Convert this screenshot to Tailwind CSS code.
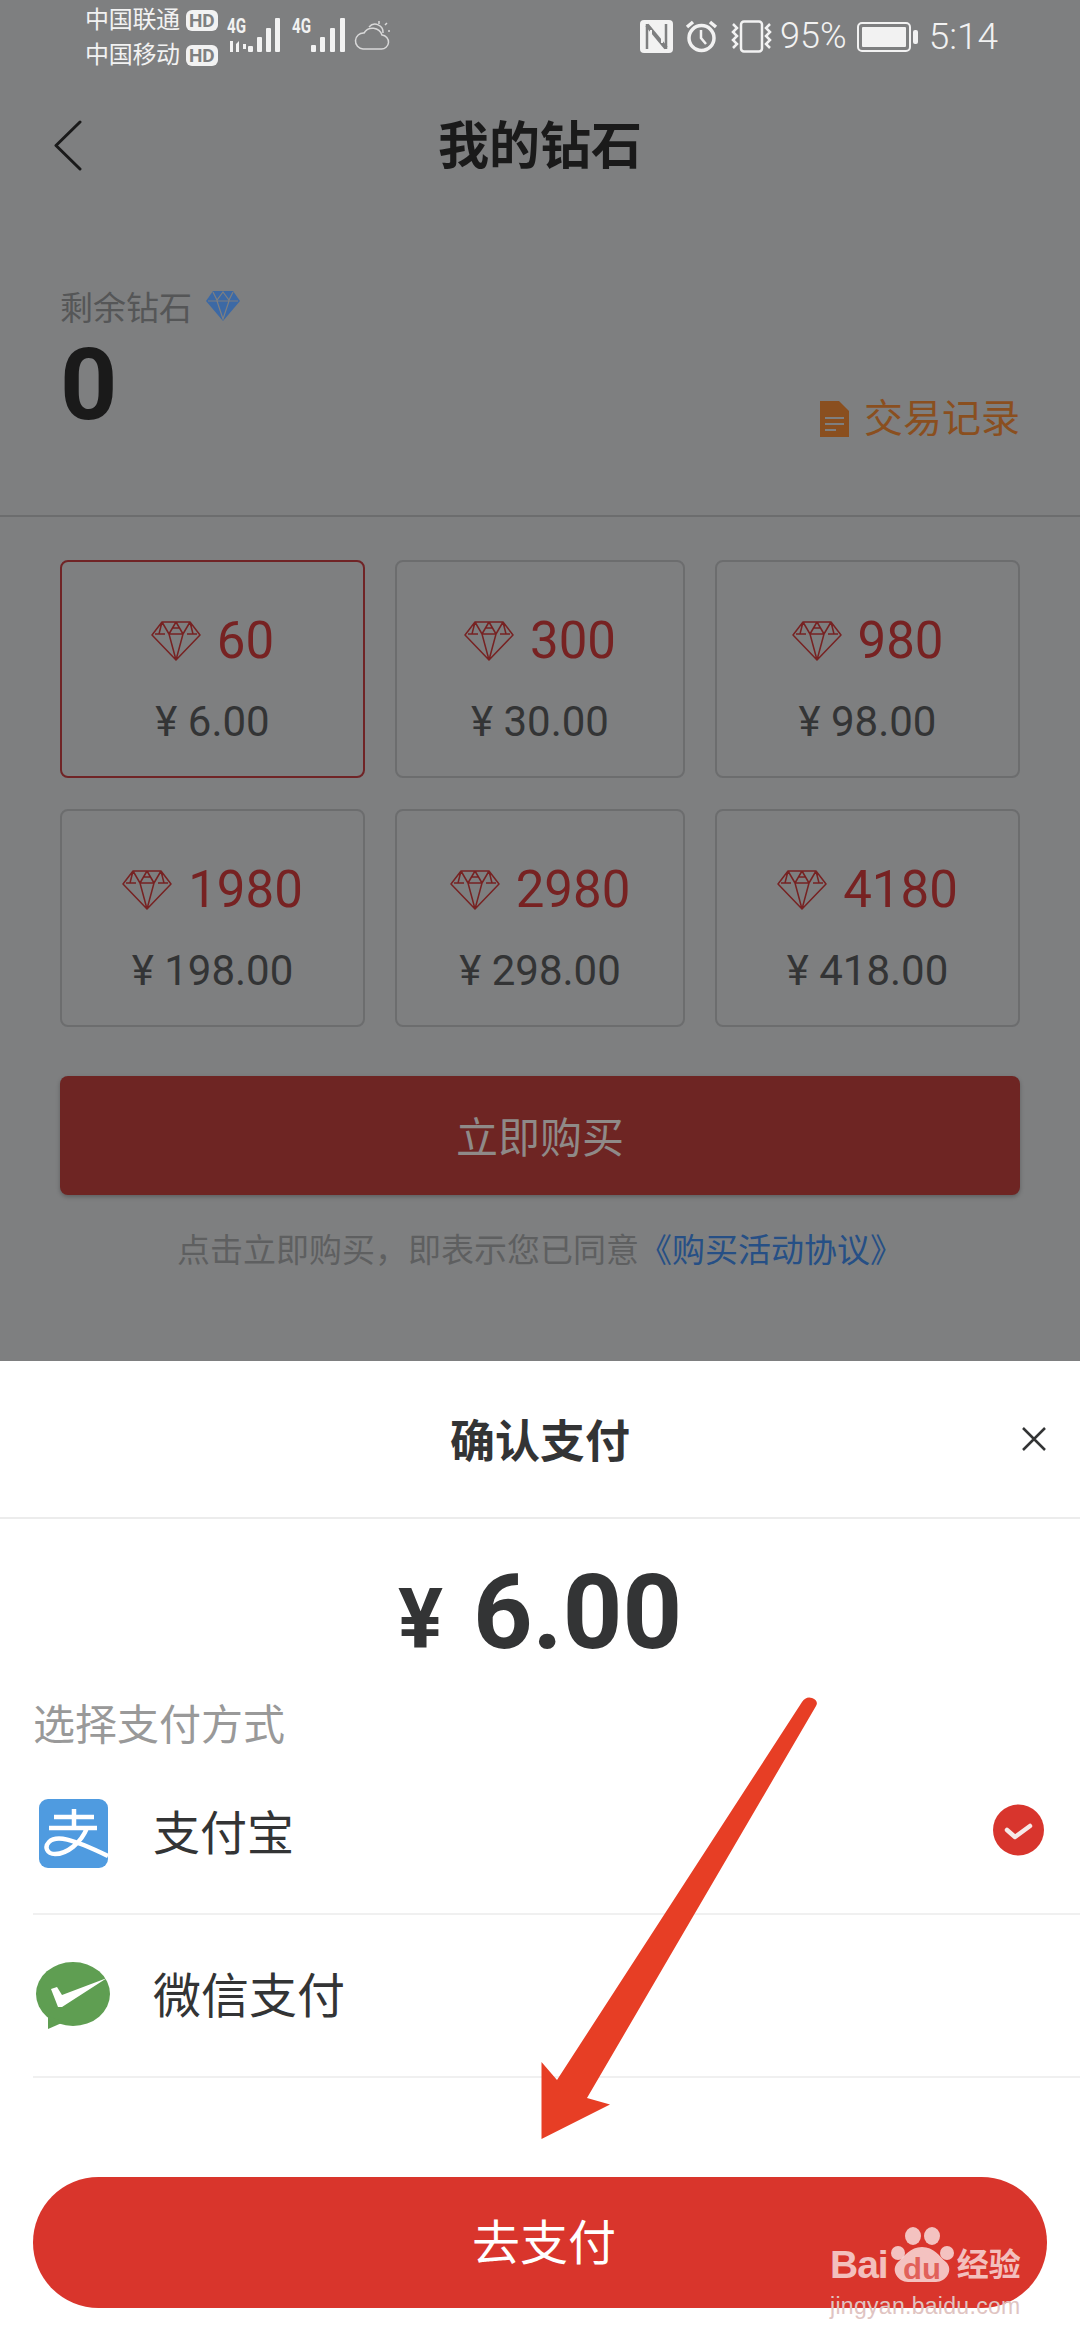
<!DOCTYPE html>
<html lang="zh">
<head>
<meta charset="utf-8">
<script src="https://cdn.jsdelivr.net/npm/@tailwindcss/browser@4"></script>
</head>
<body class="m-0 bg-white [font-family:Roboto,'Noto_Sans_CJK_SC',sans-serif]">
<svg width="0" height="0" class="absolute">
  <symbol id="gem" viewBox="0 0 50 40">
    <path fill="none" stroke="currentColor" stroke-width="1.5" stroke-linejoin="round" d="M11 1H39L49 14 25 39 1 14ZM11 1 18 13 25 1 32 13 39 1M4 13H14M18 13H32M36 13H46M18 13 25 39 32 13M11 1 8 13M39 1 42 13M21 7H29"/>
  </symbol>
</svg>
<div class="relative w-[1080px] h-[2340px] overflow-hidden">
  <!-- dimmed page -->
  <div class="h-[1361px] bg-[#7e7f80] flex flex-col">
    <!-- status bar -->
    <div class="h-[70px] flex justify-between text-[#f2f2f2]">
      <div class="flex">
        <div class="ml-[85px] mt-[9px] flex flex-col gap-[13px] text-[24px] leading-[22px] tracking-[-0.3px]">
          <div class="flex items-center gap-[6px]"><span>中国联通</span><span class="w-[32px] h-[21px] rounded-[6px] bg-[#f2f2f2] text-[#7e7f80] text-[19px] leading-[21px] font-bold text-center tracking-normal">HD</span></div>
          <div class="flex items-center gap-[6px]"><span>中国移动</span><span class="w-[32px] h-[21px] rounded-[6px] bg-[#f2f2f2] text-[#7e7f80] text-[19px] leading-[21px] font-bold text-center tracking-normal">HD</span></div>
        </div>
        <svg class="ml-[6px]" width="170" height="70" viewBox="225 0 170 70" fill="#f2f2f2">
          <text x="228" y="33" font-family="Roboto" font-weight="700" font-size="20" textLength="19" lengthAdjust="spacingAndGlyphs">4G</text>
          <path d="M231 41h3v11h-3zM237 44l3-3v11h-3zM244 44h3v5h-3z"/>
          <rect x="249" y="46" width="5" height="6" rx="1"/><rect x="258" y="37" width="5" height="15" rx="1"/><rect x="267" y="28" width="5" height="24" rx="1"/><rect x="276" y="18" width="5" height="34" rx="1"/>
          <text x="293" y="33" font-family="Roboto" font-weight="700" font-size="20" textLength="19" lengthAdjust="spacingAndGlyphs">4G</text>
          <rect x="312" y="45" width="5" height="7" rx="1"/><rect x="321" y="37" width="5" height="15" rx="1"/><rect x="331" y="28" width="5" height="24" rx="1"/><rect x="341" y="18" width="5" height="34" rx="1"/>
          <g fill="none" stroke="#d9d9d9" stroke-width="1.5"><path d="M364 49h18a7 7 0 0 0 1-14 10 10 0 0 0-18-2 8 8 0 0 0-1 16Z"/><path d="M370 27a8 8 0 0 1 14 6M380 21v3M389 31h2M388 23l-2 2"/></g>
        </svg>
      </div>
      <div class="flex items-start mr-[82px] mt-[20px]">
        <svg class="block" width="33" height="33" viewBox="0 0 33 33"><rect width="33" height="33" rx="4" fill="#f2f2f2"/><path d="M7 4v25M26 4v25" fill="none" stroke="#7e7f80" stroke-width="2.500"/><path d="M7 5 26 28" fill="none" stroke="#7e7f80" stroke-width="4"/><path d="M11 10v16M22 7v16" fill="none" stroke="#f2f2f2" stroke-width="2"/></svg>
        <svg class="block ml-[12px]" width="33" height="33" viewBox="0 0 33 33" fill="none" stroke="#f2f2f2"><circle cx="16.500" cy="18" r="12.500" stroke-width="3.500"/><path d="M16 10v8l5 6" stroke-width="2.500"/><path d="M2 7 8 2M31 7 25 2" stroke-width="3.500"/></svg>
        <svg class="block ml-[12px]" width="43" height="33" viewBox="0 0 43 33" fill="none" stroke="#f2f2f2"><rect x="11" y="1.500" width="21" height="30" rx="3" stroke-width="2.500"/><path d="M3 4 7 8 3 12 7 16 3 20 7 24 3 28M40 4 36 8 40 12 36 16 40 20 36 24 40 28" stroke-width="2.500"/></svg>
        <span class="ml-[7px] text-[36px] leading-[33px] font-light">95%</span>
        <svg class="block ml-[10px] mt-[2px]" width="61" height="30" viewBox="0 0 61 30" fill="#f2f2f2"><rect x="1" y="1" width="52" height="28" rx="4" fill="none" stroke="#f2f2f2" stroke-width="2"/><rect x="5" y="5" width="44" height="20" rx="1"/><rect x="56" y="8" width="5" height="14" rx="2"/></svg>
        <span class="ml-[11px] text-[37px] leading-[33px] font-light">5:14</span>
      </div>
    </div>
    <!-- nav -->
    <div class="mt-[49px] px-[54px] h-[51px] grid grid-cols-[1fr_auto_1fr] items-center">
      <svg width="28" height="51" viewBox="0 0 28 51" fill="none" stroke="#1a1a1a" stroke-width="3" stroke-linecap="round" stroke-linejoin="round"><path d="M26 2 2 25.500 26 49"/></svg>
      <h1 class="m-0 pt-[2px] text-[51px] leading-[51px] font-bold text-[#1a1a1a]">我的钻石</h1>
      <span></span>
    </div>
    <!-- balance -->
    <div class="mt-[120px] px-[60px] flex justify-between items-end">
      <div>
        <div class="flex items-center h-[32px]">
          <span class="pt-[4px] text-[33px] leading-[33px] text-[#555657]">剩余钻石</span>
          <svg class="ml-[14px]" width="34" height="30" viewBox="0 0 34 30"><path fill="#3c69a5" d="M7 0H27L34 10 17 30 0 10Z"/><path fill="none" stroke="#7e7f80" stroke-width="1.2" d="M7 1 11 9 17 1 23 9 27 1M2 10H32M11 10 17 28 23 10"/></svg>
        </div>
        <div class="mt-[13px] text-[100px] leading-[100px] font-bold text-[#1a1a1a]">0</div>
      </div>
      <div class="flex items-center gap-[15px] mb-[-3px]">
        <svg width="29" height="36" viewBox="0 0 29 36"><path fill="#8a4f1f" d="M0 0H19L29 10V36H0Z"/><path stroke="#7e7f80" stroke-width="2" d="M5 17H24M5 23H24M5 29H16"/></svg>
        <span class="text-[39px] leading-[38px] text-[#8a4f1f]">交易记录</span>
      </div>
    </div>
    <div class="mt-[80px] h-[2px] bg-[#6c6d6e]"></div>
    <!-- cards -->
    <div class="mt-[43px] px-[60px] grid grid-cols-[305px_290px_305px] gap-x-[30px] gap-y-[31px]">
      <div class="h-[218px] rounded-[8px] border-2 border-[#702426] pt-[54px] flex flex-col items-center">
        <div class="flex items-center gap-[16px] text-[51px] leading-[50px] text-[#772222]"><svg width="50" height="40" class="text-[#772222]"><use href="#gem"/></svg><span>60</span></div>
        <div class="mt-[36px] text-[42px] leading-[40px] text-[#333435]">¥ 6.00</div>
      </div>
      <div class="h-[218px] rounded-[8px] border-2 border-[#6c6d6e] pt-[54px] flex flex-col items-center">
        <div class="flex items-center gap-[16px] text-[51px] leading-[50px] text-[#772222]"><svg width="50" height="40" class="text-[#772222]"><use href="#gem"/></svg><span>300</span></div>
        <div class="mt-[36px] text-[42px] leading-[40px] text-[#333435]">¥ 30.00</div>
      </div>
      <div class="h-[218px] rounded-[8px] border-2 border-[#6c6d6e] pt-[54px] flex flex-col items-center">
        <div class="flex items-center gap-[16px] text-[51px] leading-[50px] text-[#772222]"><svg width="50" height="40" class="text-[#772222]"><use href="#gem"/></svg><span>980</span></div>
        <div class="mt-[36px] text-[42px] leading-[40px] text-[#333435]">¥ 98.00</div>
      </div>
      <div class="h-[218px] rounded-[8px] border-2 border-[#6c6d6e] pt-[54px] flex flex-col items-center">
        <div class="flex items-center gap-[16px] text-[51px] leading-[50px] text-[#772222]"><svg width="50" height="40" class="text-[#772222]"><use href="#gem"/></svg><span>1980</span></div>
        <div class="mt-[36px] text-[42px] leading-[40px] text-[#333435]">¥ 198.00</div>
      </div>
      <div class="h-[218px] rounded-[8px] border-2 border-[#6c6d6e] pt-[54px] flex flex-col items-center">
        <div class="flex items-center gap-[16px] text-[51px] leading-[50px] text-[#772222]"><svg width="50" height="40" class="text-[#772222]"><use href="#gem"/></svg><span>2980</span></div>
        <div class="mt-[36px] text-[42px] leading-[40px] text-[#333435]">¥ 298.00</div>
      </div>
      <div class="h-[218px] rounded-[8px] border-2 border-[#6c6d6e] pt-[54px] flex flex-col items-center">
        <div class="flex items-center gap-[16px] text-[51px] leading-[50px] text-[#772222]"><svg width="50" height="40" class="text-[#772222]"><use href="#gem"/></svg><span>4180</span></div>
        <div class="mt-[36px] text-[42px] leading-[40px] text-[#333435]">¥ 418.00</div>
      </div>
    </div>
    <div class="mt-[49px] mx-[60px] h-[119px] pt-[6px] rounded-[8px] bg-[#6e2523] shadow-[0_2px_4px_rgba(0,0,0,0.25)] flex items-center justify-center text-[42px] text-[#8f8a88]">立即购买</div>
    <div class="mt-[40px] text-center text-[33px] leading-[32px] text-[#5e5f60]">点击立即购买，即表示您已同意<span class="text-[#264f85]">《购买活动协议》</span></div>
  </div>
  <!-- sheet -->
  <div class="h-[979px] bg-white flex flex-col">
    <div class="h-[158px] border-b-2 border-[#ececec] grid grid-cols-[1fr_auto_1fr] items-center">
      <span></span>
      <h2 class="m-0 pt-[6px] text-[45px] leading-[45px] font-bold text-[#333435]">确认支付</h2>
      <svg class="justify-self-end mr-[34px]" width="24" height="24" viewBox="0 0 24 24" fill="none" stroke="#333435" stroke-width="2.500"><path d="M1 1 23 23M23 1 1 23"/></svg>
    </div>
    <div class="mt-[41px] flex items-baseline justify-center gap-[30px] font-bold text-[#333435] leading-[105px]">
      <span class="text-[84px]">¥</span><span class="text-[104px]">6.00</span>
    </div>
    <div class="mt-[33px] pl-[33px] text-[42px] leading-[41px] text-[#999999]">选择支付方式</div>
    <div class="h-[162px] ml-[33px] mt-[7px] border-b-2 border-[#f0f0f0] flex items-center">
      <svg class="ml-[6px]" width="69" height="69" viewBox="0 0 69 69"><rect width="69" height="69" rx="9" fill="#4f9be0"/><path fill="none" stroke="#fff" stroke-width="4.500" d="M15 18H55M35 10V29M10 29H58M48 29C42 44 28 55 16 55 8 55 5 48 10 43 17 36 32 39 69 57"/></svg>
      <span class="ml-[45px] text-[47px] leading-[47px] text-[#333435]">支付宝</span>
      <svg class="ml-auto mr-[36px] mb-[6px]" width="51" height="52" viewBox="0 0 51 52"><circle cx="25.500" cy="26" r="25.500" fill="#d8352d"/><path d="M14 26 22 33 37 22" fill="none" stroke="#f6e9e8" stroke-width="4.500" stroke-linecap="round" stroke-linejoin="round"/></svg>
    </div>
    <div class="h-[163px] ml-[33px] border-b-2 border-[#f0f0f0] flex items-center">
      <svg class="ml-[3px]" width="74" height="67" viewBox="0 0 74 67"><ellipse cx="37" cy="32" rx="37" ry="32" fill="#5f9e52"/><path fill="#5f9e52" d="M12 54V67L28 60Z"/><path fill="#fff" d="M15 27 21 25 26 33 71 16 26 45 22 45Z"/></svg>
      <span class="ml-[43px] pt-[3px] text-[48px] leading-[48px] text-[#333435]">微信支付</span>
    </div>
    <div class="mt-[99px] mx-[33px] h-[131px] pl-[8px] pt-[3px] rounded-full bg-[#d9352c] flex items-center justify-center text-[48px] text-white">去支付</div>
  </div>
  <!-- arrow annotation -->
  <svg class="absolute left-[0px] top-[0px] pointer-events-none" width="1080" height="2340" viewBox="0 0 1080 2340"><path fill="#e73e25" d="M802 1702Q806 1696 812 1698 819 1701 816 1706L587 2098 610 2104.500 541.500 2139V2062L557 2080Z"/></svg>
  <!-- watermark -->
  <div class="absolute left-[830px] top-[2222px] w-[192px] text-white/70 pointer-events-none">
    <div class="flex items-end h-[62px]">
      <span class="text-[39px] leading-[38px] font-bold tracking-[-1px] [font-family:'Liberation_Sans']">Bai</span>
      <svg width="68" height="60" viewBox="0 0 68 60" fill="#fff" fill-opacity="0.7"><ellipse cx="10" cy="29" rx="7" ry="7"/><ellipse cx="25" cy="12" rx="8" ry="9"/><ellipse cx="44" cy="12" rx="8" ry="9"/><ellipse cx="59" cy="29" rx="7" ry="7"/><path d="M34 23c12 0 17 9 24 15 8 8 0 20-10 20H20C10 58 2 46 10 38c7-6 12-15 24-15Z"/><text x="34" y="55" text-anchor="middle" font-family="Liberation Sans" font-weight="700" font-size="29" fill="#d9352c" textLength="38" lengthAdjust="spacingAndGlyphs">du</text></svg>
      <span class="ml-[1px] text-[32px] leading-[38px] font-bold">经验</span>
    </div>
    <div class="mt-[11px] text-[23px] leading-[23px] tracking-[0.3px] text-[#e0c4c2] [font-family:'Liberation_Sans']">jingyan.baidu.com</div>
  </div>
</div>
</body>
</html>
